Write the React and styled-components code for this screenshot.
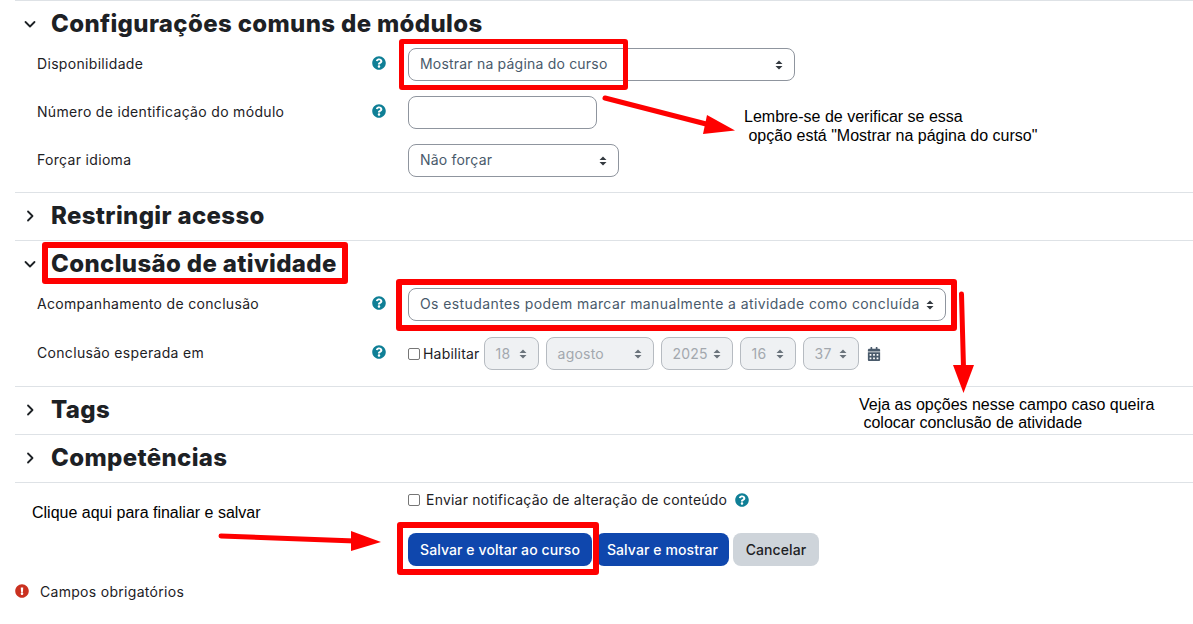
import React from 'react';
import styled, { createGlobalStyle } from 'styled-components';
import { FaQuestionCircle, FaExclamationCircle, FaCalendarAlt } from 'react-icons/fa';

const Global = createGlobalStyle`
  html, body { margin: 0; padding: 0; background: #fff; }
  body { font-family: Inter, "Noto Sans", sans-serif; color: #1d2125; overflow: hidden; }
`;
const Page = styled.div`position: relative; width: 1193px; height: 624px; overflow: hidden; background: #fff;`;
const Form = styled.div`padding-left: 15px;`;
const Section = styled.section`border-top: 1px solid #dee2e6; padding-bottom: ${p => p.$pb ?? 0}px;`;
const SectionHeader = styled.div`height: 47px; box-sizing: border-box; padding: 0 0 2px 9px; display: flex; align-items: center; gap: 15px;`;
const Chevron = styled.svg`width: 12px; height: 12px; flex: none; fill: none; stroke: #1d2125; stroke-width: 1.8; stroke-linecap: round; stroke-linejoin: round;`;
const Title = styled.h3`margin: 0; font-size: 24px; font-weight: 800; letter-spacing: 0.35px; color: #1d2125; white-space: nowrap;`;
const Row = styled.div`display: flex; align-items: flex-start; height: 33px; margin-bottom: ${p => p.$mb ?? 15}px;`;
const Label = styled.label`width: 313px; padding-left: 22px; font-size: 14px; letter-spacing: 0.32px; line-height: 31px; color: #1d2125; white-space: nowrap;`;
const Help = styled.span`width: 58px; flex: none; padding-top: 8px; padding-left: 22px; box-sizing: border-box; color: #0f7f96; font-size: 14px; line-height: 14px; display: flex;`;
const Field = styled.div`position: relative; display: inline-flex; align-items: center; box-sizing: border-box; height: 33px; width: ${p => p.$w}px; margin-right: ${p => p.$mr ?? 0}px; padding: 0 0 ${p => p.$disabled ? 0 : 3}px ${p => p.$pl ?? 11}px; border: 1px solid ${p => p.$disabled ? '#b6bbc1' : '#8f959e'}; border-radius: 8px; background: ${p => p.$disabled ? '#eff1f3' : '#fff'}; color: ${p => p.$disabled ? '#a3a8ae' : '#495a6b'}; font-size: 14px; letter-spacing: ${p => p.$ls ?? 0.2}px; white-space: nowrap; flex: none;`;
const Carets = styled.svg`position: absolute; right: ${p => p.$r ?? 11}px; top: 50%; margin-top: -5px; width: 8px; height: 10px; fill: ${p => p.$disabled ? '#6a737b' : '#343a40'};`;
const Updown = ({ disabled, r }) => (
  <Carets viewBox="0 0 8 10" $disabled={disabled} $r={r}><path d="M4 0.5 7.5 4H.5zM4 9.5.5 6h7z" /></Carets>
);
const DateLine = styled.div`display: flex; align-items: center; height: 33px;`;
const Check = styled.span`display: inline-block; box-sizing: border-box; width: 12px; height: 12px; border: 1px solid #767676; border-radius: 2px; background: #fff; flex: none;`;
const CheckText = styled.span`font-size: 14px; letter-spacing: ${p => p.$ls ?? 0.2}px; color: #1d2125; white-space: nowrap; margin-left: ${p => p.$ml ?? 3}px; margin-right: ${p => p.$mr ?? 4}px;`;
const Calendar = styled.span`color: #495a6b; font-size: 14px; display: flex; margin-left: 0;`;
const Bottom = styled.div`border-top: 1px solid #dee2e6; padding-left: 393px; padding-top: 8px;`;
const Notify = styled.div`display: flex; align-items: center; height: 17px; margin-bottom: 25px;`;
const NotifyHelp = styled.span`color: #0f7f96; font-size: 14px; display: flex; margin-left: 1px;`;
const Buttons = styled.div`display: flex; gap: 4px; height: 33px;`;
const Button = styled.div`display: flex; align-items: center; justify-content: center; box-sizing: border-box; width: ${p => p.$w}px; height: 33px; border-radius: 8px; font-size: 14px; font-weight: 500; letter-spacing: 0.1px; background: ${p => p.$primary ? '#0f47ad' : '#ced4da'}; color: ${p => p.$primary ? '#fff' : '#1d2125'}; white-space: nowrap;`;
const Required = styled.div`display: flex; align-items: center; gap: 11px; height: 18px; margin-top: 16px; font-size: 14px; letter-spacing: 0.3px; color: #1d2125;`;
const RequiredIcon = styled.span`color: #ca3120; font-size: 14px; display: flex;`;

const Frame = styled.div`position: absolute; left: ${p => p.$x}px; top: ${p => p.$y}px; width: ${p => p.$w}px; height: ${p => p.$h}px; box-sizing: border-box; border: ${p => p.$b ?? 6}px solid #fe0000; border-radius: 3px; pointer-events: none;`;
const Note = styled.div`position: absolute; left: ${p => p.$x}px; top: ${p => p.$y}px; font-family: "Liberation Sans", Arial, sans-serif; font-size: 16px; line-height: ${p => p.$lh ?? 19}px; color: #000; white-space: pre;`;
const Arrows = styled.svg`position: absolute; left: 0; top: 0; width: 1193px; height: 624px; pointer-events: none;`;

const Head = ({ open, children }) => (
  <SectionHeader>
    <Chevron viewBox="0 0 12 12">
      <path d={open ? 'M1.5 4 6 8.5 10.5 4' : 'M4 1.5 8.5 6 4 10.5'} />
    </Chevron>
    <Title>{children}</Title>
  </SectionHeader>
);

export default function App() {
  return (
    <Page>
      <Global />
      <Form>
        <Section $pb={15}>
          <Head open>Configurações comuns de módulos</Head>
          <Row>
            <Label>Disponibilidade</Label>
            <Help><FaQuestionCircle /></Help>
            <Field $w={387}>Mostrar na página do curso<Updown /></Field>
          </Row>
          <Row>
            <Label>Número de identificação do módulo</Label>
            <Help><FaQuestionCircle /></Help>
            <Field $w={189} />
          </Row>
          <Row $mb={0}>
            <Label>Forçar idioma</Label>
            <Help />
            <Field $w={211}>Não forçar<Updown /></Field>
          </Row>
        </Section>
        <Section><Head>Restringir acesso</Head></Section>
        <Section $pb={16}>
          <Head open>Conclusão de atividade</Head>
          <Row $mb={16}>
            <Label>Acompanhamento de conclusão</Label>
            <Help><FaQuestionCircle /></Help>
            <Field $w={538} $ls={0.4}>Os estudantes podem marcar manualmente a atividade como concluída<Updown /></Field>
          </Row>
          <Row $mb={0}>
            <Label>Conclusão esperada em</Label>
            <Help><FaQuestionCircle /></Help>
            <DateLine>
              <Check />
              <CheckText>Habilitar</CheckText>
              <Field $disabled $w={55} $mr={7}>18<Updown disabled /></Field>
              <Field $disabled $w={108} $mr={7}>agosto<Updown disabled /></Field>
              <Field $disabled $w={72} $mr={7}>2025<Updown disabled /></Field>
              <Field $disabled $w={56} $mr={7}>16<Updown disabled /></Field>
              <Field $disabled $w={56} $mr={8}>37<Updown disabled /></Field>
              <Calendar><FaCalendarAlt /></Calendar>
            </DateLine>
          </Row>
        </Section>
        <Section><Head>Tags</Head></Section>
        <Section><Head>Competências</Head></Section>
        <Bottom>
          <Notify>
            <Check />
            <CheckText $ml={6} $mr={7} $ls={0.22}>Enviar notificação de alteração de conteúdo</CheckText>
            <NotifyHelp><FaQuestionCircle /></NotifyHelp>
          </Notify>
          <Buttons>
            <Button $primary $w={184}>Salvar e voltar ao curso</Button>
            <Button $primary $w={133}>Salvar e mostrar</Button>
            <Button $w={86}>Cancelar</Button>
          </Buttons>
        </Bottom>
        <Required>
          <RequiredIcon><FaExclamationCircle /></RequiredIcon>
          Campos obrigatórios
        </Required>
      </Form>

      <Frame $x={399} $y={39} $w={229} $h={51} $b={5} />
      <Frame $x={42} $y={242} $w={306} $h={42} />
      <Frame $x={396} $y={279} $w={561} $h={52} />
      <Frame $x={397} $y={522} $w={202} $h={53} />
      <Arrows viewBox="0 0 1193 624">
        <g stroke="#fe0000" strokeWidth="5" strokeLinecap="round" fill="none">
          <path d="M605 98 710 125" />
          <path d="M961.500 294 963.500 368" />
          <path d="M221 536 355 541" />
        </g>
        <g fill="#fe0000">
          <path d="M707 115 735 130.500 703 134z" />
          <path d="M953 365 974 365 963.500 393z" />
          <path d="M351 531 381 542 351 551z" />
        </g>
      </Arrows>
      <Note $x={744} $y={107}>{'Lembre-se de verificar se essa\n opção está "Mostrar na página do curso"'}</Note>
      <Note $x={859} $y={396} $lh={18}>{'Veja as opções nesse campo caso queira\n colocar conclusão de atividade'}</Note>
      <Note $x={32} $y={503}>Clique aqui para finaliar e salvar</Note>
    </Page>
  );
}
